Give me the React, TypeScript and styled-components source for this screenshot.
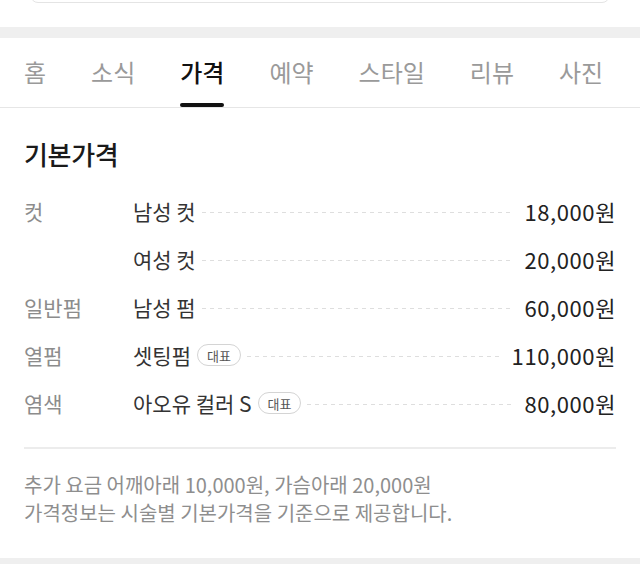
import React from "react";
import styled, { createGlobalStyle } from "styled-components";

const Global = createGlobalStyle`
  html, body { margin: 0; padding: 0; background: #fff; }
  body {
    font-family: "Noto Sans CJK KR", "Noto Sans", sans-serif;
    -webkit-font-smoothing: antialiased;
  }
`;

const Page = styled.div`
  width: 640px;
  height: 564px;
  overflow: hidden;
  display: flex;
  flex-direction: column;
  background: #fff;
`;

const SearchArea = styled.div`
  height: 27px;
  padding: 0 30px;
  overflow: hidden;
`;

const SearchBox = styled.div`
  height: 40px;
  margin-top: -37px;
  border: 1px solid #e4e4e4;
  border-radius: 8px;
  box-sizing: border-box;
`;

const Band = styled.div<{ $h: number }>`
  height: ${(p) => p.$h}px;
  background: #efefef;
  flex-shrink: 0;
`;

const Tabs = styled.nav`
  height: 69px;
  display: flex;
  gap: 45px;
  padding: 0 24px;
  border-bottom: 1px solid #e6e6e6;
`;

const Tab = styled.div<{ $active?: boolean }>`
  position: relative;
  display: flex;
  align-items: center;
  font-size: 24px;
  color: ${(p) => (p.$active ? "#111" : "#9a9a9a")};
  font-weight: ${(p) => (p.$active ? 500 : 400)};
  padding-bottom: 3px;

  &::after {
    content: "";
    display: ${(p) => (p.$active ? "block" : "none")};
    position: absolute;
    left: 0;
    right: 0;
    bottom: 0;
    height: 4px;
    border-radius: 2px;
    background: #111;
  }
`;

const Content = styled.section`
  flex: 1;
  padding: 30px 24px 0;
`;

const Heading = styled.h2`
  margin: 0 0 17px;
  font-size: 26px;
  line-height: 32px;
  font-weight: 500;
  color: #1a1a1a;
  letter-spacing: -0.3px;
`;

const Row = styled.div`
  height: 48px;
  display: grid;
  grid-template-columns: 109px 1fr;
  align-items: center;
`;

const Category = styled.div`
  font-size: 21px;
  color: #8c8c8c;
`;

const Item = styled.div`
  display: flex;
  align-items: center;
  min-width: 0;
`;

const Name = styled.span`
  font-size: 21px;
  color: #333;
  white-space: nowrap;
`;

const Badge = styled.span`
  margin-left: 6px;
  height: 22px;
  padding: 0 9px;
  box-sizing: border-box;
  display: inline-flex;
  align-items: center;
  border: 1px solid #d4d4d4;
  border-radius: 11px;
  font-size: 13px;
  color: #555;
  white-space: nowrap;
`;

const Leader = styled.span`
  flex: 1;
  height: 1px;
  margin: 2px 10px 0 6px;
  background: repeating-linear-gradient(
    to right,
    #dedede 0 4px,
    transparent 4px 8px
  );
`;

const Price = styled.span`
  font-size: 22px;
  letter-spacing: 0.6px;
  color: #222;
  white-space: nowrap;
`;

const Divider = styled.hr`
  margin: 20px 0 0;
  border: none;
  height: 2px;
  background: #ececec;
`;

const Notes = styled.div`
  padding-top: 22px;
  font-size: 20px;
  line-height: 28px;
  color: #8e8e8e;
`;

type PriceRow = { cat?: string; name: string; badge?: boolean; price: string };

const rows: PriceRow[] = [
  { cat: "컷", name: "남성 컷", price: "18,000원" },
  { name: "여성 컷", price: "20,000원" },
  { cat: "일반펌", name: "남성 펌", price: "60,000원" },
  { cat: "열펌", name: "셋팅펌", badge: true, price: "110,000원" },
  { cat: "염색", name: "아오유 컬러 S", badge: true, price: "80,000원" },
];

const tabs = ["홈", "소식", "가격", "예약", "스타일", "리뷰", "사진"];

export default function App() {
  return (
    <Page>
      <Global />
      <SearchArea>
        <SearchBox />
      </SearchArea>
      <Band $h={11} />
      <Tabs>
        {tabs.map((t) => (
          <Tab key={t} $active={t === "가격"}>
            {t}
          </Tab>
        ))}
      </Tabs>
      <Content>
        <Heading>기본가격</Heading>
        {rows.map((r, i) => (
          <Row key={i}>
            <Category>{r.cat ?? ""}</Category>
            <Item>
              <Name>{r.name}</Name>
              {r.badge && <Badge>대표</Badge>}
              <Leader />
              <Price>{r.price}</Price>
            </Item>
          </Row>
        ))}
        <Divider />
        <Notes>
          추가 요금 어깨아래 10,000원, 가슴아래 20,000원
          <br />
          가격정보는 시술별 기본가격을 기준으로 제공합니다.
        </Notes>
      </Content>
      <Band $h={6} />
    </Page>
  );
}
